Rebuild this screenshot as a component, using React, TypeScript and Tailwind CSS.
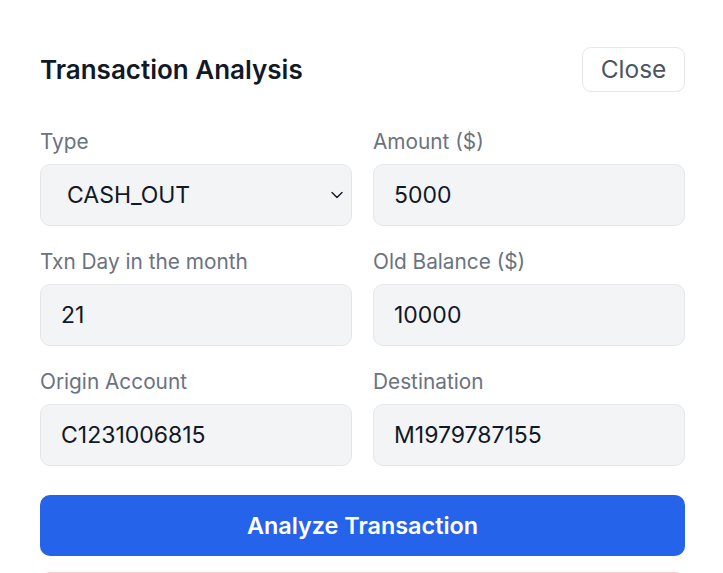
import { useState } from "react";

const FONT = { fontFamily: "Inter, 'Noto Sans', sans-serif" };

function Field({ label, value, onChange }: { label: string; value: string; onChange: (v: string) => void }) {
  return (
    <div>
      <label className="block text-[20.8px] leading-[28px] text-[#6b7280] mb-2">{label}</label>
      <input
        value={value}
        onChange={(e) => onChange(e.target.value)}
        className="w-full h-[62px] px-5 bg-[#f3f4f6] border border-[#e5e7eb] rounded-[10px] text-[23px] text-[#111827] outline-none"
      />
    </div>
  );
}

export default function App() {
  const [type, setType] = useState("CASH_OUT");
  const [amount, setAmount] = useState("5000");
  const [day, setDay] = useState("21");
  const [oldBalance, setOldBalance] = useState("10000");
  const [origin, setOrigin] = useState("C1231006815");
  const [dest, setDest] = useState("M1979787155");

  return (
    <div className="min-h-screen bg-white overflow-hidden" style={FONT}>
      <div className="pl-10 pr-[38px] pt-[47px]">
        {/* Header */}
        <div className="flex items-center justify-between">
          <h2 className="text-[26px] font-semibold text-[#111827]">Transaction Analysis</h2>
          <button className="h-[45px] w-[103px] border border-[#e5e7eb] rounded-[9px] text-[24.5px] text-[#4b5563]">
            Close
          </button>
        </div>

        {/* Form */}
        <div className="grid grid-cols-2 gap-x-[21px] gap-y-[22px] mt-9">
          <div>
            <label className="block text-[20.8px] leading-[28px] text-[#6b7280] mb-2">Type</label>
            <div className="relative">
              <select
                value={type}
                onChange={(e) => setType(e.target.value)}
                className="w-full h-[62px] pl-[26px] pr-8 bg-[#f3f4f6] border border-[#e5e7eb] rounded-[10px] text-[23px] text-[#111827] outline-none appearance-none"
              >
                <option>CASH_OUT</option>
                <option>TRANSFER</option>
                <option>PAYMENT</option>
                <option>CASH_IN</option>
                <option>DEBIT</option>
              </select>
              <svg
                className="absolute right-[9px] top-1/2 -translate-y-1/2 pointer-events-none"
                width="12"
                height="7"
                viewBox="0 0 12 7"
                fill="none"
              >
                <path d="M1 1l5 5 5-5" stroke="#111827" strokeWidth="1.4" strokeLinecap="round" strokeLinejoin="round" />
              </svg>
            </div>
          </div>
          <Field label="Amount ($)" value={amount} onChange={setAmount} />
          <Field label="Txn Day in the month" value={day} onChange={setDay} />
          <Field label="Old Balance ($)" value={oldBalance} onChange={setOldBalance} />
          <Field label="Origin Account" value={origin} onChange={setOrigin} />
          <Field label="Destination" value={dest} onChange={setDest} />
        </div>

        <button className="mt-[29px] w-full h-[61px] bg-[#2563eb] rounded-[10px] text-white text-[23.4px] font-semibold">
          Analyze Transaction
        </button>

        {/* Result alert (cut off) */}
        <div className="mt-4 h-[80px] bg-[#fef2f2] border border-[#fecaca] rounded-[10px]" />
      </div>
    </div>
  );
}
